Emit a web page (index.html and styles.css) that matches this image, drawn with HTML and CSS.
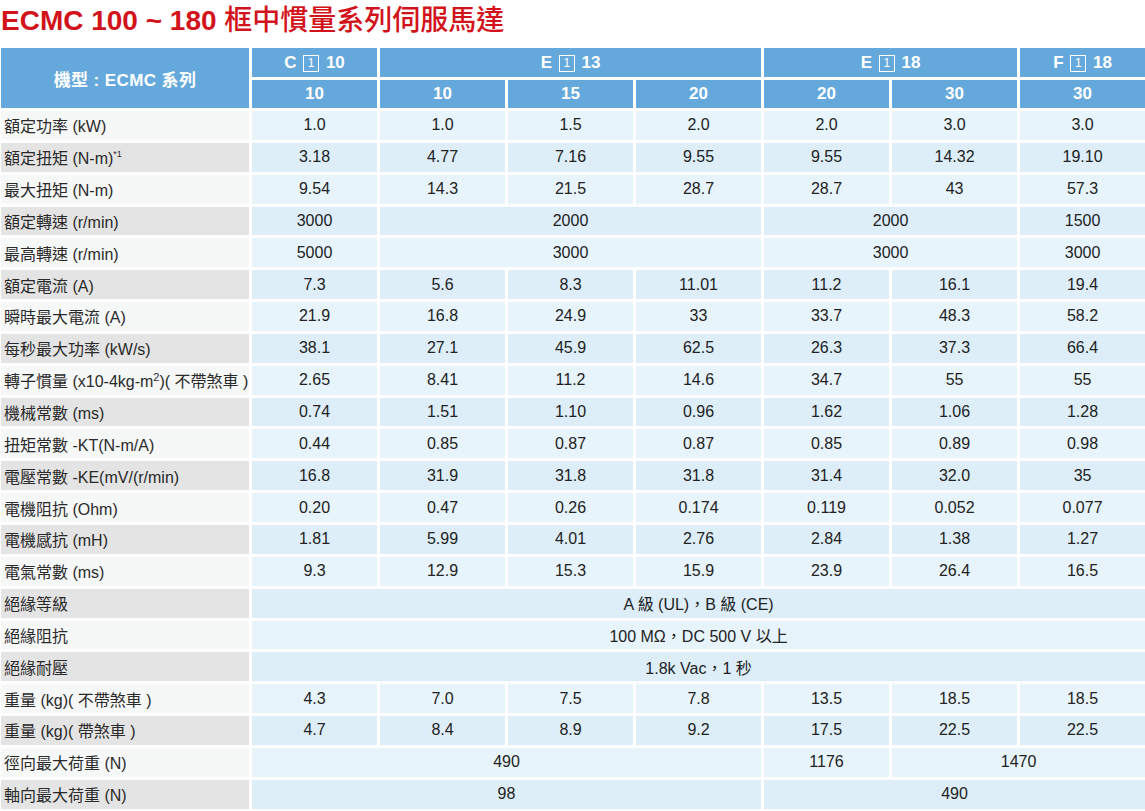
FILE: index.html
```html
<!DOCTYPE html>
<html lang="zh-Hant">
<head>
<meta charset="utf-8">
<title>ECMC 100 ~ 180 框中慣量系列伺服馬達</title>
<link rel="stylesheet" href="styles.css">
</head>
<body>
<h1 class="title">ECMC 100 ~ 180 <span class="title-cjk">框中慣量系列伺服馬達</span></h1>
<table class="spec">
  <colgroup>
    <col class="c-label"><col class="c-val"><col class="c-val"><col class="c-val"><col class="c-val"><col class="c-val"><col class="c-val"><col class="c-val">
  </colgroup>
  <thead>
    <tr class="h1">
      <th rowspan="2" class="h-model">機型 : ECMC 系列</th>
      <th>C <span class="box">1</span> 10</th>
      <th colspan="3">E <span class="box">1</span> 13</th>
      <th colspan="2">E <span class="box">1</span> 18</th>
      <th>F <span class="box">1</span> 18</th>
    </tr>
    <tr class="h2">
      <th>10</th><th>10</th><th>15</th><th>20</th><th>20</th><th>30</th><th>30</th>
    </tr>
  </thead>
  <tbody>
    <tr class="odd"><td class="lbl">額定功率 (kW)</td><td>1.0</td><td>1.0</td><td>1.5</td><td>2.0</td><td>2.0</td><td>3.0</td><td>3.0</td></tr>
    <tr class="even"><td class="lbl">額定扭矩 (N-m)<sup>*1</sup></td><td>3.18</td><td>4.77</td><td>7.16</td><td>9.55</td><td>9.55</td><td>14.32</td><td>19.10</td></tr>
    <tr class="odd"><td class="lbl">最大扭矩 (N-m)</td><td>9.54</td><td>14.3</td><td>21.5</td><td>28.7</td><td>28.7</td><td>43</td><td>57.3</td></tr>
    <tr class="even"><td class="lbl">額定轉速 (r/min)</td><td>3000</td><td colspan="3">2000</td><td colspan="2">2000</td><td>1500</td></tr>
    <tr class="odd"><td class="lbl">最高轉速 (r/min)</td><td>5000</td><td colspan="3">3000</td><td colspan="2">3000</td><td>3000</td></tr>
    <tr class="even"><td class="lbl">額定電流 (A)</td><td>7.3</td><td>5.6</td><td>8.3</td><td>11.01</td><td>11.2</td><td>16.1</td><td>19.4</td></tr>
    <tr class="odd"><td class="lbl">瞬時最大電流 (A)</td><td>21.9</td><td>16.8</td><td>24.9</td><td>33</td><td>33.7</td><td>48.3</td><td>58.2</td></tr>
    <tr class="even"><td class="lbl">每秒最大功率 (kW/s)</td><td>38.1</td><td>27.1</td><td>45.9</td><td>62.5</td><td>26.3</td><td>37.3</td><td>66.4</td></tr>
    <tr class="odd"><td class="lbl">轉子慣量 (x10-4kg-m<sup class="sq">2</sup>)( 不帶煞車 )</td><td>2.65</td><td>8.41</td><td>11.2</td><td>14.6</td><td>34.7</td><td>55</td><td>55</td></tr>
    <tr class="even"><td class="lbl">機械常數 (ms)</td><td>0.74</td><td>1.51</td><td>1.10</td><td>0.96</td><td>1.62</td><td>1.06</td><td>1.28</td></tr>
    <tr class="odd"><td class="lbl">扭矩常數 -KT(N-m/A)</td><td>0.44</td><td>0.85</td><td>0.87</td><td>0.87</td><td>0.85</td><td>0.89</td><td>0.98</td></tr>
    <tr class="even"><td class="lbl">電壓常數 -KE(mV/(r/min)</td><td>16.8</td><td>31.9</td><td>31.8</td><td>31.8</td><td>31.4</td><td>32.0</td><td>35</td></tr>
    <tr class="odd"><td class="lbl">電機阻抗 (Ohm)</td><td>0.20</td><td>0.47</td><td>0.26</td><td>0.174</td><td>0.119</td><td>0.052</td><td>0.077</td></tr>
    <tr class="even"><td class="lbl">電機感抗 (mH)</td><td>1.81</td><td>5.99</td><td>4.01</td><td>2.76</td><td>2.84</td><td>1.38</td><td>1.27</td></tr>
    <tr class="odd"><td class="lbl">電氣常數 (ms)</td><td>9.3</td><td>12.9</td><td>15.3</td><td>15.9</td><td>23.9</td><td>26.4</td><td>16.5</td></tr>
    <tr class="even"><td class="lbl">絕緣等級</td><td colspan="7">A 級 (UL)，B 級 (CE)</td></tr>
    <tr class="odd"><td class="lbl">絕緣阻抗</td><td colspan="7">100 MΩ，DC 500 V 以上</td></tr>
    <tr class="even"><td class="lbl">絕緣耐壓</td><td colspan="7">1.8k Vac，1 秒</td></tr>
    <tr class="odd"><td class="lbl">重量 (kg)( 不帶煞車 )</td><td>4.3</td><td>7.0</td><td>7.5</td><td>7.8</td><td>13.5</td><td>18.5</td><td>18.5</td></tr>
    <tr class="even"><td class="lbl">重量 (kg)( 帶煞車 )</td><td>4.7</td><td>8.4</td><td>8.9</td><td>9.2</td><td>17.5</td><td>22.5</td><td>22.5</td></tr>
    <tr class="odd"><td class="lbl">徑向最大荷重 (N)</td><td colspan="4">490</td><td>1176</td><td colspan="2">1470</td></tr>
    <tr class="even"><td class="lbl">軸向最大荷重 (N)</td><td colspan="4">98</td><td colspan="3">490</td></tr>
  </tbody>
</table>
</body>
</html>
```

FILE: styles.css
```css
html, body {
  margin: 0;
  padding: 0;
  background: #ffffff;
  overflow: hidden;
}
body {
  font-family: "Liberation Sans", Arial, "Noto Sans CJK TC", sans-serif;
  color: #222222;
}
.title {
  margin: 0;
  padding: 0 0 0 1px;
  height: 45px;
  line-height: 36px;
  font-size: 28px;
  font-weight: bold;
  color: #d3131b;
  white-space: nowrap;
}
.title-cjk {
  font-family: "Noto Sans CJK TC", sans-serif;
  font-weight: 500;
  letter-spacing: 0;
}
.spec {
  border-collapse: separate;
  border-spacing: 3px;
  margin: 0 0 0 -2px;
  table-layout: fixed;
  width: 1150px;
}
.c-label { width: 248px; }
.c-val { width: 125px; }
.spec th {
  background: #65a9dc;
  color: #ffffff;
  font-weight: bold;
  font-size: 17px;
  text-align: center;
  padding: 0;
  white-space: nowrap;
}
.h1 th { height: 29px; }
.h2 th { height: 28px; }
.h-model {
  font-size: 18px;
  letter-spacing: 0.4px;
}
.box {
  display: inline-block;
  width: 14px;
  height: 15px;
  border: 1px solid #ffffff;
  font-size: 12px;
  font-weight: normal;
  line-height: 15px;
  text-align: center;
  vertical-align: 1px;
  margin: 0 2px;
}
.spec td {
  height: 28.85px;
  padding: 0;
  font-size: 16px;
  text-align: center;
  white-space: nowrap;
  color: #222222;
}
.spec td.lbl {
  text-align: left;
  padding-left: 3px;
  color: #2a2a2a;
}
.odd td { background: #e8f4fc; }
.even td { background: #ddeef9; }
.odd td.lbl { background: #f6f7f7; }
.even td.lbl { background: #e4e4e4; }
sup {
  font-size: 9px;
  line-height: 0;
  vertical-align: 7px;
}
sup.sq {
  font-size: 11px;
  vertical-align: 6px;
}
```
